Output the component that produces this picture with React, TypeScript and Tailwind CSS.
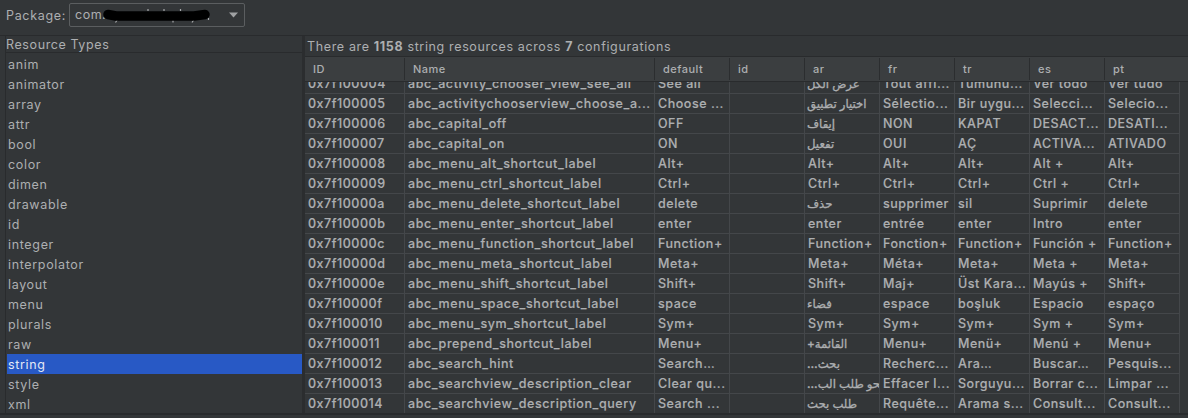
const resourceTypes = [
  'anim', 'animator', 'array', 'attr', 'bool', 'color', 'dimen', 'drawable', 'id',
  'integer', 'interpolator', 'layout', 'menu', 'plurals', 'raw', 'string', 'style', 'xml',
];

const columns = ['ID', 'Name', 'default', 'id', 'ar', 'fr', 'tr', 'es', 'pt'];

const rows: string[][] = [
  ['0x7f100004', 'abc_activity_chooser_view_see_all', 'See all', '', 'عرض الكل', 'Tout affi...', 'Tümünü...', 'Ver todo', 'Ver tudo'],
  ['0x7f100005', 'abc_activitychooserview_choose_a...', 'Choose ...', '', 'اختيار تطبيق', 'Sélectio...', 'Bir uygu...', 'Selecci...', 'Selecio...'],
  ['0x7f100006', 'abc_capital_off', 'OFF', '', 'إيقاف', 'NON', 'KAPAT', 'DESACT...', 'DESATI...'],
  ['0x7f100007', 'abc_capital_on', 'ON', '', 'تفعيل', 'OUI', 'AÇ', 'ACTIVA...', 'ATIVADO'],
  ['0x7f100008', 'abc_menu_alt_shortcut_label', 'Alt+', '', 'Alt+', 'Alt+', 'Alt+', 'Alt +', 'Alt+'],
  ['0x7f100009', 'abc_menu_ctrl_shortcut_label', 'Ctrl+', '', 'Ctrl+', 'Ctrl+', 'Ctrl+', 'Ctrl +', 'Ctrl+'],
  ['0x7f10000a', 'abc_menu_delete_shortcut_label', 'delete', '', 'حذف', 'supprimer', 'sil', 'Suprimir', 'delete'],
  ['0x7f10000b', 'abc_menu_enter_shortcut_label', 'enter', '', 'enter', 'entrée', 'enter', 'Intro', 'enter'],
  ['0x7f10000c', 'abc_menu_function_shortcut_label', 'Function+', '', 'Function+', 'Fonction+', 'Function+', 'Función +', 'Function+'],
  ['0x7f10000d', 'abc_menu_meta_shortcut_label', 'Meta+', '', 'Meta+', 'Méta+', 'Meta+', 'Meta +', 'Meta+'],
  ['0x7f10000e', 'abc_menu_shift_shortcut_label', 'Shift+', '', 'Shift+', 'Maj+', 'Üst Kara...', 'Mayús +', 'Shift+'],
  ['0x7f10000f', 'abc_menu_space_shortcut_label', 'space', '', 'فضاء', 'espace', 'boşluk', 'Espacio', 'espaço'],
  ['0x7f100010', 'abc_menu_sym_shortcut_label', 'Sym+', '', 'Sym+', 'Sym+', 'Sym+', 'Sym +', 'Sym+'],
  ['0x7f100011', 'abc_prepend_shortcut_label', 'Menu+', '', 'القائمة+', 'Menu+', 'Menü+', 'Menú +', 'Menu+'],
  ['0x7f100012', 'abc_search_hint', 'Search…', '', 'بحث…', 'Recherc...', 'Ara…', 'Buscar…', 'Pesquis...'],
  ['0x7f100013', 'abc_searchview_description_clear', 'Clear qu...', '', 'محو طلب الب...', 'Effacer l...', 'Sorguyu...', 'Borrar c...', 'Limpar ...'],
  ['0x7f100014', 'abc_searchview_description_query', 'Search ...', '', 'طلب بحث', 'Requête...', 'Arama s...', 'Consult...', 'Consult...'],
];

const isArabic = (text: string) => /[\u0600-\u06ff]/.test(text);
const grid = 'grid grid-cols-[100px_250px_repeat(7,75px)]';

function Toolbar() {
  return (
    <div className="flex h-[35px] items-start pl-[6px] pt-[3px]">
      <span className="w-[63px] pt-[3px] leading-5 tracking-[0.68px]">Package:</span>
      <div className="flex h-6 w-[176px] items-center justify-between rounded-[2px] border border-[#5b5e60] pl-[5px] pr-[6px]">
        <span className="relative pt-px">
          com.
          <svg className="absolute left-[27px] top-[3px]" width="110" height="16" viewBox="0 0 110 16">
            <path d="M15.500 11.500l-2 3M46 3v-2M62 3v-2M78.500 3v-2M71 12v2.500M92 11.500l-2 3M106.500 10v2" stroke="#a8aaac" strokeWidth="1.200" fill="none" />
            <path d="M6 6.500L14 8H50L70 8H92L103 6.500" stroke="#000" strokeWidth="9.500" strokeLinecap="round" strokeLinejoin="round" fill="none" />
          </svg>
        </span>
        <svg width="9" height="6" viewBox="0 0 9 6"><path d="M0 .5h9L4.500 5.500z" fill="#9fa1a3" /></svg>
      </div>
    </div>
  );
}

function TypeList() {
  return (
    <div className="w-[297px] shrink-0 border-l border-[#292b2d] tracking-[0.66px]">
      <div className="h-[17px] border-b border-[#292b2d] leading-[17px] tracking-[0.6px]">Resource Types</div>
      <div className="pl-px pt-px">
        {resourceTypes.map((type) => (
          <div
            key={type}
            className={type === 'string' ? 'h-5 bg-[#2859c5] pl-px pt-px leading-5 text-[#e4e9f5]' : 'h-5 pl-px pt-px leading-5'}
          >
            {type}
          </div>
        ))}
      </div>
    </div>
  );
}

function ResourceTable() {
  return (
    <div className="flex min-w-0 flex-1 flex-col">
      <div className="h-[21px] shrink-0 border-b border-[#292b2d] pl-[2px] leading-[21px] tracking-[0.64px]">
        There are <b className="font-bold">1158</b> string resources across <b className="font-bold">7</b> configurations
      </div>
      <div className="h-[25px] shrink-0 border-b border-[#292b2d] bg-[#3b3e40] py-px">
        <div className={grid}>
          {columns.map((name, i) => (
            <div
              key={i}
              className={i === columns.length - 1
                ? 'h-[22px] pl-2 text-[11px] font-medium leading-[22px]'
                : 'h-[22px] border-r border-[#2b2d2f] pl-2 text-[11px] font-medium leading-[22px]'}
            >
              {name}
            </div>
          ))}
        </div>
      </div>
      <div className="flex min-h-0 flex-1 flex-col overflow-hidden">
        <div className="-mt-2 flex flex-col">
          {rows.map((row) => (
            <div key={row[0]} className={grid}>
              {row.map((text, i) => (
                <div
                  key={i}
                  className={i === 1
                    ? 'h-5 overflow-hidden whitespace-nowrap border-b border-r border-[#44474a] pl-[3px] font-medium leading-5 tracking-[0.59px] [-webkit-text-stroke:0.15px]'
                    : 'h-5 overflow-hidden whitespace-nowrap border-b border-r border-[#44474a] pl-[3px] font-medium leading-5 tracking-[0.53px] [-webkit-text-stroke:0.15px]'}
                >
                  {isArabic(text)
                    ? <span dir="rtl" className="-ml-px inline-block pt-px text-[11.7px] leading-[19px] tracking-normal [-webkit-text-stroke:0.3px]">{text}</span>
                    : text}
                </div>
              ))}
            </div>
          ))}
        </div>
      </div>
    </div>
  );
}

export default function App() {
  return (
    <div className="flex h-[418px] w-[1188px] flex-col overflow-hidden bg-[#333638] font-['Inter','DejaVu_Sans',sans-serif] text-[12.5px] tracking-[0.5px] text-[#adafb1]">
      <Toolbar />
      <div className="flex h-[380px] shrink-0 border-b-2 border-t border-[#292b2d] pl-[5px]">
        <TypeList />
        <div className="w-[3px] shrink-0 bg-[#2b2d2f]" />
        <ResourceTable />
      </div>
    </div>
  );
}
